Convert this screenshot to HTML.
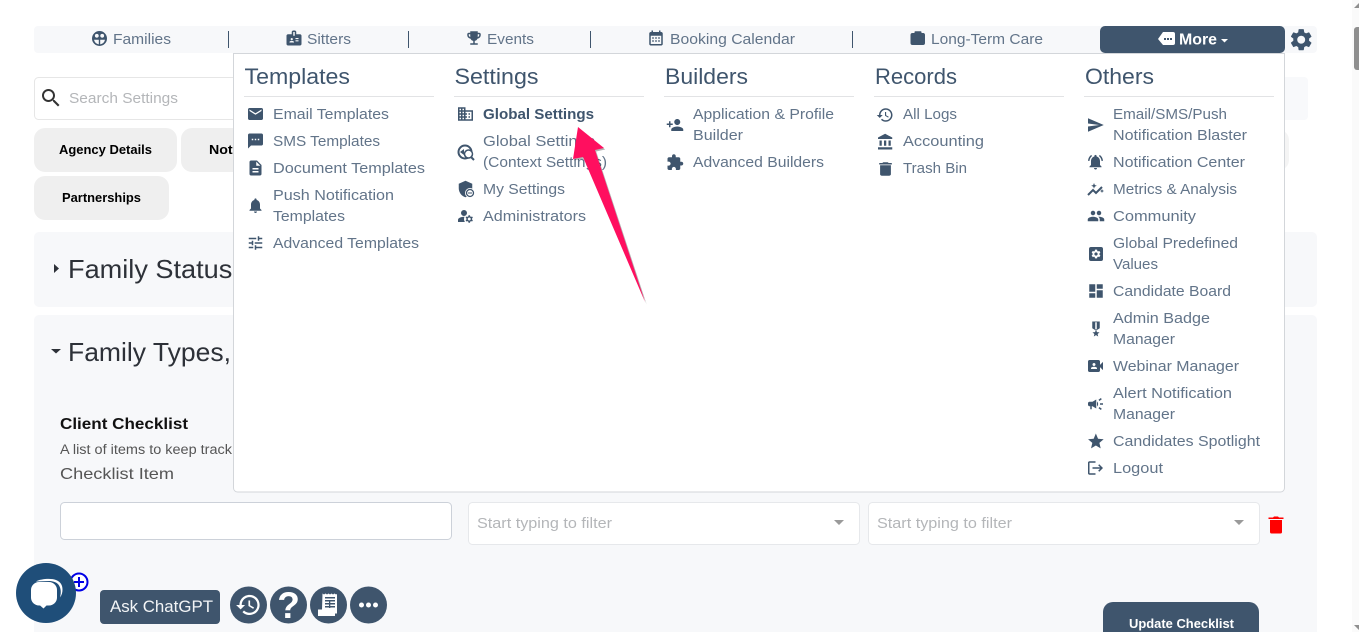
<!DOCTYPE html>
<html lang="en"><head><meta charset="utf-8"><title>Settings</title>
<style>
html,body{margin:0;padding:0;background:#fff;width:1359px;height:632px;overflow:hidden}
svg{display:block}
text{font-family:"Liberation Sans",sans-serif}
.n{font-size:15px;fill:#627489}
.h{font-size:22px;fill:#3f556d}
.i{font-size:15px;fill:#627489}
.ic{fill:#3f556d}
.t{font-size:12.5px;font-weight:700;fill:#000}
.ph{font-size:15px;fill:#b4b6b9}
</style></head><body>
<svg width="1359" height="632" viewBox="0 0 1359 632" xmlns="http://www.w3.org/2000/svg">
<rect width="1359" height="632" fill="#fff"/>
<!-- nav -->
<rect x="34" y="26" width="1283" height="27" rx="4" fill="#f7f8fa"/>
<g fill="#3f556d"><rect x="228" y="31" width="1" height="17"/><rect x="408" y="31" width="1" height="17"/><rect x="590" y="31" width="1" height="17"/><rect x="852" y="31" width="1" height="17"/></g>
<circle cx="99.500" cy="38.500" r="7.500" fill="#3f556d"/><circle cx="96.800" cy="35.800" r="1.900" fill="#f7f8fa"/><circle cx="102.200" cy="35.800" r="1.900" fill="#f7f8fa"/><path d="M94 39.800h4.800v4.600a6 6 0 0 1-4.800-4.600zM100.200 39.800h4.800a6 6 0 0 1-4.800 4.600z" fill="#f7f8fa"/>
<text class="n" x="113" y="44" textLength="58" lengthAdjust="spacingAndGlyphs">Families</text>
<path class="ic" transform="translate(285,29) scale(.75)" d="M20 7h-5V4c0-1.100-.9-2-2-2h-2c-1.100 0-2 .9-2 2v3H4c-1.100 0-2 .9-2 2v11c0 1.100.9 2 2 2h16c1.100 0 2-.9 2-2V9c0-1.100-.9-2-2-2zM9 12c.83 0 1.500.67 1.500 1.500S9.830 15 9 15s-1.500-.67-1.500-1.500S8.170 12 9 12zm3 6H6v-.75c0-1 2-1.500 3-1.500s3 .5 3 1.500V18zm1-9h-2V4h2v5zm5 7.500h-4V15h4v1.500zm0-3h-4V12h4v1.500z"/>
<text class="n" x="307" y="44" textLength="44" lengthAdjust="spacingAndGlyphs">Sitters</text>
<path class="ic" transform="translate(465,29) scale(.75)" d="M19 5h-2V3H7v2H5c-1.100 0-2 .9-2 2v1c0 2.550 1.920 4.630 4.390 4.940.63 1.500 1.980 2.630 3.610 2.960V19H7v2h10v-2h-4v-3.100c1.630-.33 2.980-1.460 3.610-2.960C19.080 12.630 21 10.550 21 8V7c0-1.100-.9-2-2-2zM5 8V7h2v3.820C5.840 10.400 5 9.300 5 8zm14 0c0 1.300-.84 2.400-2 2.820V7h2v1z"/>
<text class="n" x="487" y="44" textLength="47" lengthAdjust="spacingAndGlyphs">Events</text>
<path class="ic" transform="translate(647,29) scale(.75)" d="M19 4h-1V2h-2v2H8V2H6v2H5c-1.100 0-2 .9-2 2v14c0 1.100.9 2 2 2h14c1.100 0 2-.9 2-2V6c0-1.100-.9-2-2-2zm0 16H5V9h14v11zM7 11h2v2H7zm4 0h2v2h-2zm4 0h2v2h-2zM7 15h2v2H7zm4 0h2v2h-2zm4 0h2v2h-2z"/>
<text class="n" x="670" y="44" textLength="125" lengthAdjust="spacingAndGlyphs">Booking Calendar</text>
<path class="ic" d="M910.500 35a2 2 0 0 1 2-2h2v-1a.8.8 0 0 1 .8-.8h5.400a.8.8 0 0 1 .8.8v1h2a2 2 0 0 1 1.500 2v8a2 2 0 0 1-2 2h-10.500a2 2 0 0 1-2-2z"/>
<text class="n" x="931" y="44" textLength="112" lengthAdjust="spacingAndGlyphs">Long-Term Care</text>
<path d="M1100 31a5 5 0 0 1 5-5h175a5 5 0 0 1 5 5v17a5 5 0 0 1-5 5h-175a5 5 0 0 1-5-5z" fill="#3f556d"/>
<path d="M1158 39l5-7h10a2 2 0 0 1 2 2v9a2 2 0 0 1-2 2h-10z" fill="#fff"/>
<g fill="#3f556d"><rect x="1164" y="38" width="2" height="2"/><rect x="1167" y="38" width="2" height="2"/><rect x="1170" y="38" width="2" height="2"/></g>
<text x="1179" y="44.500" font-size="15.500" font-weight="700" fill="#fff" textLength="38" lengthAdjust="spacingAndGlyphs">More</text>
<path d="M1221 39h7l-3.500 3.500z" fill="#fff"/>
<path class="ic" transform="translate(1288,26.500) scale(1.100)" d="M19.140 12.940c.04-.3.06-.61.06-.94 0-.32-.02-.64-.07-.94l2.030-1.580c.18-.14.23-.41.12-.61l-1.920-3.320c-.12-.22-.37-.29-.59-.22l-2.390.96c-.5-.38-1.030-.7-1.620-.94l-.36-2.540c-.04-.24-.24-.41-.48-.41h-3.840c-.24 0-.43.17-.47.41l-.36 2.540c-.59.24-1.130.57-1.620.94l-2.390-.96c-.22-.08-.47 0-.59.22L2.740 8.870c-.12.21-.08.47.12.61l2.030 1.580c-.05.3-.09.63-.09.94s.02.64.07.94l-2.030 1.580c-.18.14-.23.41-.12.61l1.920 3.320c.12.22.37.29.59.22l2.390-.96c.5.38 1.030.7 1.620.94l.36 2.540c.05.24.24.41.48.41h3.840c.24 0 .44-.17.47-.41l.36-2.540c.59-.24 1.130-.56 1.620-.94l2.390.96c.22.08.47 0 .59-.22l1.920-3.320c.12-.22.07-.47-.12-.61l-2.010-1.580zM12 15.600c-1.980 0-3.600-1.620-3.600-3.600s1.620-3.600 3.600-3.600 3.600 1.620 3.600 3.600-1.620 3.600-3.600 3.600z"/>
<!-- scrollbar -->
<rect x="1352" y="0" width="7" height="632" fill="#fafafa"/>
<rect x="1354" y="27" width="8" height="43" rx="3" fill="#8f8f8f"/>
<path d="M1354 8l5-5v5zM1354 625l5 5v-5z" fill="#8f8f8f"/>
<!-- search & tabs -->
<rect x="1270" y="77" width="38" height="43" rx="4" fill="#f8f9fb"/>
<rect x="34.500" y="77.500" width="300" height="42" rx="4" fill="#fff" stroke="#e6e6e6"/>
<path transform="translate(39,86)" fill="#333" d="M15.500 14h-.79l-.28-.27C15.410 12.590 16 11.110 16 9.500 16 5.910 13.090 3 9.500 3S3 5.910 3 9.500 5.910 16 9.500 16c1.610 0 3.090-.59 4.230-1.570l.27.28v.79l5 4.990L20.490 19l-4.990-5zm-6 0C7.010 14 5 11.990 5 9.500S7.010 5 9.500 5 14 7.010 14 9.500 11.990 14 9.500 14z"/>
<text class="ph" x="69" y="103" textLength="109" lengthAdjust="spacingAndGlyphs">Search Settings</text>
<rect x="34" y="128" width="143" height="44" rx="11" fill="#efefef"/>
<text class="t" x="59" y="154" textLength="93" lengthAdjust="spacingAndGlyphs">Agency Details</text>
<rect x="181" y="128" width="140" height="44" rx="11" fill="#efefef"/>
<text class="t" x="209" y="154" textLength="86" lengthAdjust="spacingAndGlyphs">Notifications</text>
<rect x="1240" y="130" width="49" height="40" rx="10" fill="#f4f4f4"/>
<rect x="34" y="176" width="135" height="44" rx="11" fill="#efefef"/>
<text class="t" x="62" y="202" textLength="79" lengthAdjust="spacingAndGlyphs">Partnerships</text>
<!-- cards -->
<rect x="34" y="232" width="1283" height="75" rx="5" fill="#f7f8fa"/>
<rect x="34" y="315" width="1283" height="340" rx="5" fill="#f7f8fa"/>
<path d="M54 264l5 4.500-5 4.500z" fill="#2d3138"/>
<text x="68" y="278" font-size="26" fill="#2d3138" textLength="193" lengthAdjust="spacingAndGlyphs">Family Statuses</text>
<path d="M51 349h10l-5 4.500z" fill="#2d3138"/>
<text x="68" y="361" font-size="26" fill="#2d3138" textLength="163" lengthAdjust="spacingAndGlyphs">Family Types,</text>
<text x="60" y="429" font-size="16" font-weight="700" fill="#111" textLength="128" lengthAdjust="spacingAndGlyphs">Client Checklist</text>
<text x="60" y="454" font-size="13.500" fill="#555" textLength="172" lengthAdjust="spacingAndGlyphs">A list of items to keep track</text>
<text x="60" y="479" font-size="16" fill="#555" textLength="114" lengthAdjust="spacingAndGlyphs">Checklist Item</text>
<rect x="60.500" y="502.500" width="391" height="37" rx="4" fill="#fff" stroke="#ccd1d9"/>
<rect x="468.500" y="502.500" width="391" height="42" rx="4" fill="#fff" stroke="#e6e8eb"/>
<rect x="868.500" y="502.500" width="391" height="42" rx="4" fill="#fff" stroke="#e6e8eb"/>
<text class="ph" x="477" y="528" textLength="135" lengthAdjust="spacingAndGlyphs">Start typing to filter</text>
<text class="ph" x="877" y="528" textLength="135" lengthAdjust="spacingAndGlyphs">Start typing to filter</text>
<path d="M834 520h10l-5 5zM1234 520h10l-5 5z" fill="#9a9a9a"/>
<path fill="#f00" d="M1270 520h12v12a1.500 1.500 0 0 1-1.500 1.500h-9a1.500 1.500 0 0 1-1.500-1.500zM1268.500 517.500h4.500l1-1h4l1 1h4.500v1.500h-15z"/>
<path d="M1103 632v-20a10 10 0 0 1 10-10h136a10 10 0 0 1 10 10v20z" fill="#3f556d"/>
<text x="1129" y="628" font-size="12.500" font-weight="700" fill="#fff" textLength="105" lengthAdjust="spacingAndGlyphs">Update Checklist</text>
<!-- dropdown -->
<path d="M233.500 53.500h1051v434.500a4 4 0 0 1-4 4h-1043a4 4 0 0 1-4-4z" fill="#fff" stroke="#d3d6da"/>
<g fill="#e2e3e5"><rect x="244" y="96" width="190" height="1"/><rect x="454" y="96" width="190" height="1"/><rect x="664" y="96" width="190" height="1"/><rect x="874" y="96" width="190" height="1"/><rect x="1084" y="96" width="190" height="1"/></g>
<text class="h" x="244.500" y="84" textLength="105.500" lengthAdjust="spacingAndGlyphs">Templates</text>
<text class="h" x="454.500" y="84" textLength="84" lengthAdjust="spacingAndGlyphs">Settings</text>
<text class="h" x="665" y="84" textLength="83" lengthAdjust="spacingAndGlyphs">Builders</text>
<text class="h" x="875" y="84" textLength="82" lengthAdjust="spacingAndGlyphs">Records</text>
<text class="h" x="1085" y="84" textLength="69" lengthAdjust="spacingAndGlyphs">Others</text>
<!-- col1 -->
<text class="i" x="273" y="119" textLength="116" lengthAdjust="spacingAndGlyphs">Email Templates</text>
<text class="i" x="273" y="146" textLength="107" lengthAdjust="spacingAndGlyphs">SMS Templates</text>
<text class="i" x="273" y="173" textLength="152" lengthAdjust="spacingAndGlyphs">Document Templates</text>
<text class="i" x="273" y="200" textLength="121" lengthAdjust="spacingAndGlyphs">Push Notification</text>
<text class="i" x="273" y="221" textLength="72" lengthAdjust="spacingAndGlyphs">Templates</text>
<text class="i" x="273" y="248" textLength="146" lengthAdjust="spacingAndGlyphs">Advanced Templates</text>
<path class="ic" transform="translate(246.500,105) scale(.75)" d="M20 4H4c-1.100 0-2 .9-2 2v12c0 1.100.9 2 2 2h16c1.100 0 2-.9 2-2V6c0-1.100-.9-2-2-2zm0 4l-8 5-8-5V6l8 5 8-5v2z"/>
<path class="ic" transform="translate(246.500,132) scale(.75)" d="M20 2H4c-1.100 0-2 .9-2 2v18l4-4h14c1.100 0 2-.9 2-2V4c0-1.100-.9-2-2-2zM9 11H7V9h2v2zm4 0h-2V9h2v2zm4 0h-2V9h2v2z"/>
<path class="ic" transform="translate(246.500,159) scale(.75)" d="M14 2H6c-1.100 0-1.990.9-1.990 2L4 20c0 1.100.89 2 1.990 2H18c1.100 0 2-.9 2-2V8l-6-6zm2 16H8v-2h8v2zm0-4H8v-2h8v2zm-3-5V3.500L18.500 9H13z"/>
<path class="ic" transform="translate(246.500,196.500) scale(.75)" d="M12 22c1.100 0 2-.9 2-2h-4c0 1.100.89 2 2 2zm6-6v-5c0-3.070-1.640-5.640-4.500-6.320V4c0-.83-.67-1.500-1.500-1.500s-1.500.67-1.500 1.500v.68C7.630 5.360 6 7.920 6 11v5l-2 2v1h16v-1l-2-2z"/>
<path class="ic" transform="translate(246.500,234) scale(.75)" d="M3 17v2h6v-2H3zM3 5v2h10V5H3zm10 16v-2h8v-2h-8v-2h-2v6h2zM7 9v2H3v2h4v2h2V9H7zm14 4v-2H11v2h10zm-6-4h2V7h4V5h-4V3h-2v6z"/>
<!-- col2 -->
<text x="483" y="119" font-size="15" font-weight="700" fill="#3f556d" textLength="111" lengthAdjust="spacingAndGlyphs">Global Settings</text>
<text class="i" x="483" y="146" textLength="112" lengthAdjust="spacingAndGlyphs">Global Settings</text>
<text class="i" x="483" y="167" textLength="124" lengthAdjust="spacingAndGlyphs">(Context Settings)</text>
<text class="i" x="483" y="194" textLength="82" lengthAdjust="spacingAndGlyphs">My Settings</text>
<text class="i" x="483" y="221" textLength="103" lengthAdjust="spacingAndGlyphs">Administrators</text>
<path class="ic" transform="translate(456.500,105) scale(.75)" d="M12 7V3H2v18h20V7H12zM6 19H4v-2h2v2zm0-4H4v-2h2v2zm0-4H4V9h2v2zm0-4H4V5h2v2zm4 12H8v-2h2v2zm0-4H8v-2h2v2zm0-4H8V9h2v2zm0-4H8V5h2v2zm10 12h-8v-2h2v-2h-2v-2h2v-2h-2V9h8v10zm-2-8h-2v2h2v-2zm0 4h-2v2h2v-2z"/>
<circle cx="465" cy="152" r="6.500" fill="none" stroke="#3f556d" stroke-width="2"/><path d="M460 152l4-3v6z" fill="#3f556d"/><circle cx="468.500" cy="154" r="4" fill="#fff" stroke="#3f556d" stroke-width="1.500"/><path d="M471 157l3 3" stroke="#3f556d" stroke-width="2"/>
<path class="ic" transform="translate(456.500,180) scale(.75)" d="M12 1L3 5v6c0 5.550 3.840 10.740 9 12 5.160-1.260 9-6.450 9-12V5l-9-4z"/>
<circle cx="470" cy="193" r="5" fill="#fff"/><circle cx="470" cy="193" r="3.500" fill="none" stroke="#3f556d" stroke-width="1.300"/><rect x="468" y="192.500" width="4" height="1" fill="#3f556d"/>
<path class="ic" transform="translate(456.500,207) scale(.75)" d="M10.670 13.020c-.22-.01-.44-.02-.67-.02-2.420 0-4.680.67-6.610 1.820-.88.52-1.390 1.500-1.390 2.530V20h9.260c-.79-1.130-1.260-2.510-1.260-4 0-1.070.25-2.070.67-2.980zM10 4a4 4 0 1 0 0 8 4 4 0 0 0 0-8zM20.750 16c0-.22-.03-.42-.06-.63l1.140-1.010-1-1.730-1.450.49c-.32-.27-.68-.48-1.080-.63L18 11h-2l-.3 1.490c-.4.15-.76.36-1.080.63l-1.450-.49-1 1.730 1.140 1.010c-.03.21-.06.41-.06.63s.03.42.06.63l-1.140 1.010 1 1.730 1.450-.49c.32.27.68.48 1.080.63L16 21h2l.3-1.490c.4-.15.76-.36 1.080-.63l1.450.49 1-1.730-1.140-1.010c.03-.21.06-.41.06-.63zM17 18c-1.100 0-2-.9-2-2s.9-2 2-2 2 .9 2 2-.9 2-2 2z"/>
<!-- col3 -->
<text class="i" x="693" y="119" textLength="141" lengthAdjust="spacingAndGlyphs">Application &amp; Profile</text>
<text class="i" x="693" y="140" textLength="50" lengthAdjust="spacingAndGlyphs">Builder</text>
<text class="i" x="693" y="167" textLength="131" lengthAdjust="spacingAndGlyphs">Advanced Builders</text>
<path class="ic" transform="translate(666,116) scale(.75)" d="M15 12c2.210 0 4-1.790 4-4s-1.790-4-4-4-4 1.790-4 4 1.790 4 4 4zm-9-2V7H4v3H1v2h3v3h2v-3h3v-2H6zm9 4c-2.670 0-8 1.340-8 4v2h16v-2c0-2.660-5.330-4-8-4z"/>
<path class="ic" transform="translate(666,153.500) scale(.75)" d="M20.500 11H19V7c0-1.100-.9-2-2-2h-4V3.500C13 2.120 11.880 1 10.500 1S8 2.120 8 3.500V5H4c-1.100 0-1.990.9-1.990 2v3.800H3.500c1.490 0 2.700 1.210 2.700 2.700s-1.210 2.700-2.700 2.700H2V20c0 1.100.9 2 2 2h3.800v-1.500c0-1.490 1.210-2.700 2.700-2.700 1.490 0 2.700 1.210 2.700 2.700V22H17c1.100 0 2-.9 2-2v-4h1.500c1.380 0 2.500-1.120 2.500-2.500S21.880 11 20.500 11z"/>
<!-- col4 -->
<text class="i" x="903" y="119" textLength="54" lengthAdjust="spacingAndGlyphs">All Logs</text>
<text class="i" x="903" y="146" textLength="81" lengthAdjust="spacingAndGlyphs">Accounting</text>
<text class="i" x="903" y="173" textLength="64" lengthAdjust="spacingAndGlyphs">Trash Bin</text>
<path class="ic" transform="translate(876,106) scale(.75)" d="M13 3c-4.970 0-9 4.030-9 9H1l3.890 3.890.07.14L9 12H6c0-3.870 3.130-7 7-7s7 3.130 7 7-3.130 7-7 7c-1.930 0-3.680-.79-4.940-2.060l-1.420 1.420C8.270 19.990 10.510 21 13 21c4.970 0 9-4.030 9-9s-4.030-9-9-9zm-1 5v5l4.280 2.540.72-1.210-3.500-2.080V8H12z"/>
<path class="ic" transform="translate(876.500,133) scale(.75)" d="M4 10v7h3v-7H4zm6 0v7h3v-7h-3zM2 22h19v-3H2v3zm14-12v7h3v-7h-3zm-4.500-9L2 6v2h19V6l-9.500-5z"/>
<path class="ic" transform="translate(874.700,160) scale(.9,.75)" d="M6 19c0 1.100.9 2 2 2h8c1.100 0 2-.9 2-2V7H6v12zM19 4h-3.500l-1-1h-5l-1 1H5v2h14V4z"/>
<!-- col5 -->
<text class="i" x="1113" y="119" textLength="114" lengthAdjust="spacingAndGlyphs">Email/SMS/Push</text>
<text class="i" x="1113" y="140" textLength="134" lengthAdjust="spacingAndGlyphs">Notification Blaster</text>
<text class="i" x="1113" y="167" textLength="132" lengthAdjust="spacingAndGlyphs">Notification Center</text>
<text class="i" x="1113" y="194" textLength="124" lengthAdjust="spacingAndGlyphs">Metrics &amp; Analysis</text>
<text class="i" x="1113" y="221" textLength="83" lengthAdjust="spacingAndGlyphs">Community</text>
<text class="i" x="1113" y="248" textLength="125" lengthAdjust="spacingAndGlyphs">Global Predefined</text>
<text class="i" x="1113" y="269" textLength="45" lengthAdjust="spacingAndGlyphs">Values</text>
<text class="i" x="1113" y="296" textLength="118" lengthAdjust="spacingAndGlyphs">Candidate Board</text>
<text class="i" x="1113" y="323" textLength="97" lengthAdjust="spacingAndGlyphs">Admin Badge</text>
<text class="i" x="1113" y="344" textLength="62" lengthAdjust="spacingAndGlyphs">Manager</text>
<text class="i" x="1113" y="371" textLength="126" lengthAdjust="spacingAndGlyphs">Webinar Manager</text>
<text class="i" x="1113" y="398" textLength="119" lengthAdjust="spacingAndGlyphs">Alert Notification</text>
<text class="i" x="1113" y="419" textLength="62" lengthAdjust="spacingAndGlyphs">Manager</text>
<text class="i" x="1113" y="446" textLength="147" lengthAdjust="spacingAndGlyphs">Candidates Spotlight</text>
<text class="i" x="1113" y="473" textLength="50" lengthAdjust="spacingAndGlyphs">Logout</text>
<path class="ic" transform="translate(1086.500,116) scale(.75)" d="M2.010 21L23 12 2.010 3 2 10l15 2-15 2z"/>
<path class="ic" transform="translate(1086.500,153) scale(.75)" d="M7.580 4.080L6.150 2.650C3.750 4.480 2.170 7.300 2.030 10.500h2c.15-2.650 1.510-4.970 3.550-6.420zm12.390 6.420h2c-.15-3.200-1.730-6.020-4.120-7.850l-1.420 1.430c2.020 1.450 3.390 3.770 3.540 6.420zM18 11c0-3.070-1.640-5.640-4.500-6.320V4c0-.83-.67-1.500-1.500-1.500s-1.500.67-1.500 1.500v.68C7.630 5.360 6 7.920 6 11v5l-2 2v1h16v-1l-2-2v-5zm-6 11c.14 0 .27-.01.4-.04.65-.14 1.180-.58 1.440-1.180.1-.24.15-.5.15-.78h-4c.01 1.100.9 2 2.010 2z"/>
<path d="M1088 195l5-5 3 3 6-6" fill="none" stroke="#3f556d" stroke-width="2"/><path class="ic" d="M1094 183l.8 2 2 .8-2 .8-.8 2-.8-2-2-.8 2-.8zM1102 189l.6 1.400 1.400.6-1.400.6-.6 1.400-.6-1.400-1.400-.6 1.400-.6z"/>
<path class="ic" transform="translate(1087,207) scale(.75)" d="M16 11c1.660 0 2.990-1.340 2.990-3S17.660 5 16 5c-1.660 0-3 1.340-3 3s1.340 3 3 3zm-8 0c1.660 0 2.990-1.340 2.990-3S9.660 5 8 5C6.340 5 5 6.340 5 8s1.340 3 3 3zm0 2c-2.330 0-7 1.170-7 3.500V19h14v-2.500c0-2.330-4.670-3.500-7-3.500zm8 0c-.29 0-.62.02-.97.05 1.160.84 1.970 1.970 1.970 3.450V19h6v-2.500c0-2.330-4.670-3.500-7-3.500z"/>
<rect x="1089" y="247" width="14" height="14" rx="2" fill="#3f556d"/>
<path fill="#fff" transform="translate(1090.500,248.500) scale(.46)" d="M19.140 12.940c.04-.3.06-.61.06-.94 0-.32-.02-.64-.07-.94l2.030-1.580c.18-.14.23-.41.12-.61l-1.920-3.320c-.12-.22-.37-.29-.59-.22l-2.390.96c-.5-.38-1.030-.7-1.620-.94l-.36-2.540c-.04-.24-.24-.41-.48-.41h-3.840c-.24 0-.43.17-.47.41l-.36 2.540c-.59.24-1.130.57-1.620.94l-2.390-.96c-.22-.08-.47 0-.59.22L2.740 8.870c-.12.21-.08.47.12.61l2.030 1.580c-.05.3-.09.63-.09.94s.02.64.07.94l-2.030 1.580c-.18.14-.23.41-.12.61l1.920 3.320c.12.22.37.29.59.22l2.390-.96c.5.38 1.030.7 1.620.94l.36 2.540c.05.24.24.41.48.41h3.840c.24 0 .44-.17.47-.41l.36-2.540c.59-.24 1.130-.56 1.620-.94l2.390.96c.22.08.47 0 .59-.22l1.920-3.320c.12-.22.07-.47-.12-.61l-2.010-1.580zM12 15.600c-1.980 0-3.600-1.620-3.600-3.600s1.620-3.600 3.600-3.600 3.600 1.620 3.600 3.600-1.620 3.600-3.600 3.600z"/>
<path class="ic" transform="translate(1087,282) scale(.75)" d="M3 13h8V3H3v10zm0 8h8v-6H3v6zm10 0h8V11h-8v10zm0-18v6h8V3h-8z"/>
<path class="ic" transform="translate(1087,320) scale(.75)" d="M17 10.430V2H7v8.430c0 .35.18.68.49.86l4.180 2.510-.99 2.340-3.410.29 2.590 2.240L9.070 22 12 20.230 14.930 22l-.78-3.330 2.590-2.240-3.410-.29-.99-2.340 4.180-2.510c.3-.18.48-.5.48-.86zm-4 1.800l-1 .6-1-.6V3h2v9.230z"/>
<path class="ic" transform="translate(1086.500,357) scale(.75)" d="M18 10.480V6c0-1.100-.9-2-2-2H4c-1.100 0-2 .9-2 2v12c0 1.100.9 2 2 2h12c1.100 0 2-.9 2-2v-4.480l4 3.980v-11l-4 3.980zM10 8c1.100 0 2 .9 2 2s-.9 2-2 2-2-.9-2-2 .9-2 2-2zm4 8H6v-.57c0-.81.48-1.530 1.220-1.850.85-.37 1.790-.58 2.780-.58.99 0 1.930.21 2.780.58.74.32 1.220 1.040 1.220 1.850V16z"/>
<path class="ic" transform="translate(1086.500,395) scale(.75)" d="M18 11v2h4v-2h-4zm-2 6.610c.96.71 2.210 1.650 3.200 2.390.4-.53.8-1.070 1.200-1.600-.99-.74-2.240-1.680-3.200-2.400-.4.54-.8 1.080-1.200 1.610zM20.400 5.600c-.4-.53-.8-1.070-1.200-1.600-.99.74-2.240 1.680-3.200 2.400.4.53.8 1.070 1.200 1.600.96-.72 2.210-1.650 3.200-2.400zM4 9c-1.100 0-2 .9-2 2v2c0 1.100.9 2 2 2h1v4h2v-4h1l5 3V6L8 9H4zm11.500 3c0-1.330-.58-2.530-1.500-3.350v6.690c.92-.81 1.500-2.010 1.500-3.340z"/>
<path class="ic" transform="translate(1086.500,432) scale(.78)" d="M12 17.270L18.180 21l-1.640-7.030L22 9.240l-7.190-.61L12 2 9.190 8.630 2 9.240l5.460 4.730L5.820 21z"/>
<path class="ic" transform="translate(1086.500,459) scale(.75)" d="M17 7l-1.410 1.410L18.170 11H8v2h10.170l-2.580 2.580L17 17l5-5zM4 5h8V3H4c-1.100 0-2 .9-2 2v14c0 1.100.9 2 2 2h8v-2H4V5z"/>
<!-- arrow -->
<polygon points="578,127 604,148 595,150 645.500,303 583,157 573,159" fill="#000" opacity=".3" transform="translate(1.200,1.500)"/>
<polygon points="578,127 604,148 595,150 645,302 583,157 573,159" fill="#ff0f5f"/>
<!-- bottom widgets -->
<circle cx="79" cy="582" r="8.500" fill="#fff" stroke="#0000e6" stroke-width="2"/>
<path d="M79 577v10M74 582h10" stroke="#0000e6" stroke-width="2"/>
<circle cx="46" cy="593" r="30" fill="#1f4e79"/>
<path d="M36 581.500c4-2.500 15-3.500 20-1.500 4.500 1.800 6.500 5 6.500 9.500 0 3-.7 5.500-2.500 8 1-4 1-7 0-10-1.500-4.500-5-6-10-6.500z" fill="#fff"/>
<rect x="31" y="582" width="26" height="23.500" rx="8" fill="#fff"/>
<path d="M39.500 605h7.500l-3.500 3.500z" fill="#fff"/>
<rect x="100" y="590" width="120" height="34" rx="4" fill="#3f556d"/>
<text x="110" y="612" font-size="17" fill="#f2f4f6" textLength="103" lengthAdjust="spacingAndGlyphs">Ask ChatGPT</text>
<circle cx="248.500" cy="605" r="18.500" fill="#3f556d"/><circle cx="288.500" cy="605" r="18.500" fill="#3f556d"/><circle cx="328.500" cy="605" r="18.500" fill="#3f556d"/><circle cx="368.500" cy="605" r="18.500" fill="#3f556d"/>
<path fill="#fff" transform="translate(235,591.500) scale(1.120)" d="M13 3c-4.970 0-9 4.030-9 9H1l3.890 3.890.07.14L9 12H6c0-3.870 3.130-7 7-7s7 3.130 7 7-3.130 7-7 7c-1.930 0-3.680-.79-4.940-2.060l-1.420 1.420C8.270 19.990 10.510 21 13 21c4.970 0 9-4.030 9-9s-4.030-9-9-9zm-1 5v5l4.280 2.540.72-1.210-3.500-2.080V8H12z"/>
<text x="288.500" y="618" font-size="37" font-weight="700" fill="#fff" text-anchor="middle">?</text>
<path d="M322.500 593.500l1.500 1 1.500-1 1.500 1 1.500-1 1.500 1 1.500-1 1.500 1 1.500-1 1.500 1 1 -.5v19.500h-2v2.500h-17v-6.500h4z" fill="#fff"/>
<g fill="#3f556d"><rect x="325" y="597" width="10" height="1.500"/><rect x="325" y="600" width="10" height="1.500"/><rect x="325" y="603" width="10" height="1.500"/><rect x="325" y="606" width="10" height="1.500"/><rect x="329" y="600" width="1.300" height="8"/></g>
<circle cx="361.500" cy="605" r="2.500" fill="#fff"/><circle cx="368.500" cy="605" r="2.500" fill="#fff"/><circle cx="375.500" cy="605" r="2.500" fill="#fff"/>
</svg>
</body></html>
